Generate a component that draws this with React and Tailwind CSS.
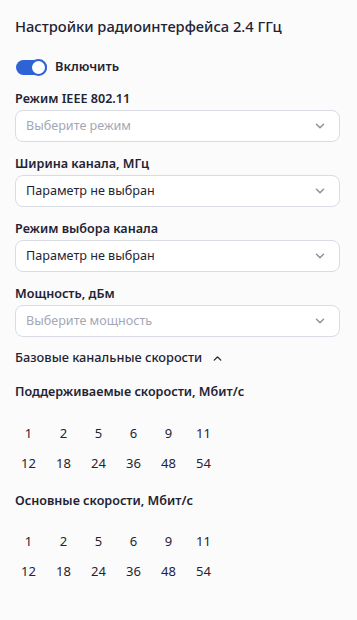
import { ChevronDown, ChevronUp } from "lucide-react";

const rates = [
    [1, 2, 5, 6, 9, 11],
    [12, 18, 24, 36, 48, 54],
];

function Field({ label, value, placeholder }) {
    return (
        <div className="flex flex-col">
            <div className="h-5 leading-5 text-[12.6px] font-semibold text-[#1f2433]">{label}</div>
            <div className="mt-px h-8 rounded-lg border border-[#d9dce3] bg-white flex items-center justify-between pl-[10px] pr-[12px]">
                <span className={value ? "text-[12.6px] text-[#1f2433]" : "text-[12.6px] text-[#a3a8b4]"}>
                    {value || placeholder}
                </span>
                <ChevronDown className="w-[14px] h-[14px] text-[#8c919c]" strokeWidth={2.5} />
            </div>
        </div>
    );
}

function RateGrid() {
    return (
        <div className="-ml-[4px] flex flex-col">
            {rates.map((row, i) => (
                <div key={i} className="flex h-[30px] items-center">
                    {row.map((r) => (
                        <span key={r} className="w-[35px] text-center text-[13px] text-[#1f2433]">{r}</span>
                    ))}
                </div>
            ))}
        </div>
    );
}

export default function App() {
    return (
        <div className="min-h-screen bg-[#fbfbfc] pl-[15px] pr-[17px] pt-[15px] pb-6" style={{ fontFamily: '"Noto Sans", "Open Sans", sans-serif' }}>
            <h1 className="h-[22px] leading-[22px] text-[14.7px] font-medium text-[#1f2433]">Настройки радиоинтерфейса 2.4 ГГц</h1>

            <div className="mt-[20px] flex items-center gap-[8px] h-5">
                <div className="relative ml-px w-[31px] h-[15px] rounded-full bg-[#2d63d4]">
                    <div className="absolute right-0 -top-[1px] w-[17px] h-[17px] rounded-full bg-white border-2 border-[#2d63d4]"></div>
                </div>
                <span className="text-[12.8px] font-semibold text-[#1f2433]">Включить</span>
            </div>

            <div className="mt-[12px] flex flex-col gap-[12px]">
                <Field label="Режим IEEE 802.11" placeholder="Выберите режим" />
                <Field label="Ширина канала, МГц" value="Параметр не выбран" />
                <Field label="Режим выбора канала" value="Параметр не выбран" />
                <Field label="Мощность, дБм" placeholder="Выберите мощность" />
            </div>

            <div className="mt-[11px] h-5 flex items-center gap-[9px]">
                <span className="text-[12.8px] font-medium text-[#1f2433]">Базовые канальные скорости</span>
                <ChevronUp className="w-[13px] h-[13px] text-[#1f2433]" strokeWidth={2.5} />
            </div>

            <div className="mt-[14px] h-5 leading-5 text-[12.6px] font-semibold text-[#1f2433]">Поддерживаемые скорости, Мбит/с</div>
            <div className="mt-[17px]">
                <RateGrid />
            </div>

            <div className="mt-[12px] h-5 leading-5 text-[12.6px] font-semibold text-[#1f2433]">Основные скорости, Мбит/с</div>
            <div className="mt-[16px]">
                <RateGrid />
            </div>
        </div>
    );
}
